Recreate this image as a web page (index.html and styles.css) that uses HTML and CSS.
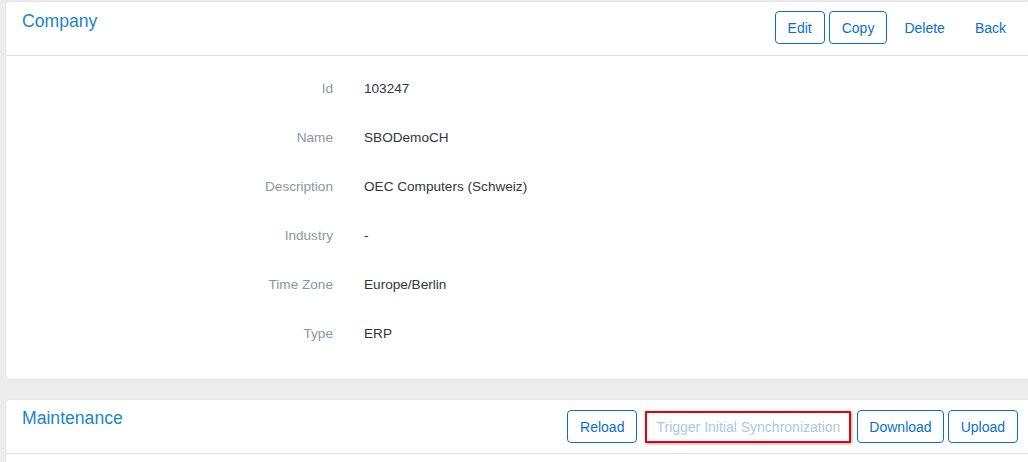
FILE: index.html
```html
<!DOCTYPE html>
<html lang="en">
<head>
  <meta charset="UTF-8">
  <title>Company</title>
  <link rel="stylesheet" href="styles.css">
</head>
<body>

  <div class="page">
    <section class="card card-company">
      <div class="card-header">
        <h2 class="card-title">Company</h2>
        <div class="toolbar">
          <button class="btn">Edit</button>
          <button class="btn">Copy</button>
          <button class="btn btn-ghost">Delete</button>
          <button class="btn btn-ghost">Back</button>
        </div>
      </div>
      <div class="details">
        <div class="label">Id</div>
        <div class="value">103247</div>
        <div class="label">Name</div>
        <div class="value">SBODemoCH</div>
        <div class="label">Description</div>
        <div class="value">OEC Computers (Schweiz)</div>
        <div class="label">Industry</div>
        <div class="value">-</div>
        <div class="label">Time Zone</div>
        <div class="value">Europe/Berlin</div>
        <div class="label">Type</div>
        <div class="value">ERP</div>
      </div>
    </section>

    <section class="card card-maintenance">
      <div class="card-header">
        <h2 class="card-title">Maintenance</h2>
        <div class="toolbar">
          <button class="btn">Reload</button>
          <button class="btn btn-disabled btn-marked">Trigger Initial Synchronization</button>
          <button class="btn btn-narrow">Download</button>
          <button class="btn">Upload</button>
        </div>
      </div>
      <div class="card-body"></div>
    </section>
  </div>

</body>
</html>
```

FILE: styles.css
```css
body {
  background-color: #ececed;
  color: #32363a;
  font-family: "Liberation Sans", Arial, sans-serif;
  font-size: 13.6px;
  margin: 0;
  padding: 0;
  overflow: hidden;
}

.page {
  padding: 2px 0 0 6px;
  display: flex;
  flex-direction: column;
  gap: 21px;
}

.card {
  background-color: #ffffff;
  border-radius: 4px 0 0 4px;
  box-shadow: 0 0 2px rgba(0, 0, 0, 0.08);
}

.card-header {
  box-sizing: border-box;
  height: 54px;
  display: flex;
  justify-content: space-between;
  align-items: flex-start;
  padding: 9px 10px 0 16px;
  border-bottom: 1px solid #e2e2e2;
}

.card-company .card-header {
  padding-right: 9px;
}

.card-title {
  margin: 0;
  font-size: 17.6px;
  font-weight: normal;
  color: #1b86c6;
  line-height: 20px;
}

.toolbar {
  display: flex;
  gap: 4px;
  margin-top: 0;
}

.btn {
  font-family: inherit;
  font-size: 14px;
  height: 33px;
  padding: 0 12px;
  background-color: #ffffff;
  color: #0a6ed1;
  border: 1px solid #0a6ed1;
  border-radius: 4px;
  cursor: pointer;
}

.btn-narrow {
  padding: 0 11px;
}

.btn-ghost {
  border-color: transparent;
  padding: 0 12px;
}

.btn-disabled {
  color: #a9c9ea;
}

.btn-marked {
  height: 32px;
  padding: 0 9px;
  border: 2px solid #e5000f;
  border-radius: 1px;
  box-shadow: 1px 1px 3px rgba(0, 0, 0, 0.35);
  margin: 1px 2px 0 4px;
}

.details {
  display: grid;
  grid-template-columns: 327px 1fr;
  column-gap: 31px;
  grid-auto-rows: 49px;
  align-items: center;
  padding: 8px 0 21px;
}

.label {
  text-align: right;
  color: #8a97a4;
}

.value {
  color: #32363a;
}

.card-maintenance .card-header {
  padding-top: 8px;
}

.card-maintenance .toolbar {
  margin-top: 2px;
}

.card-body {
  height: 40px;
}
```
